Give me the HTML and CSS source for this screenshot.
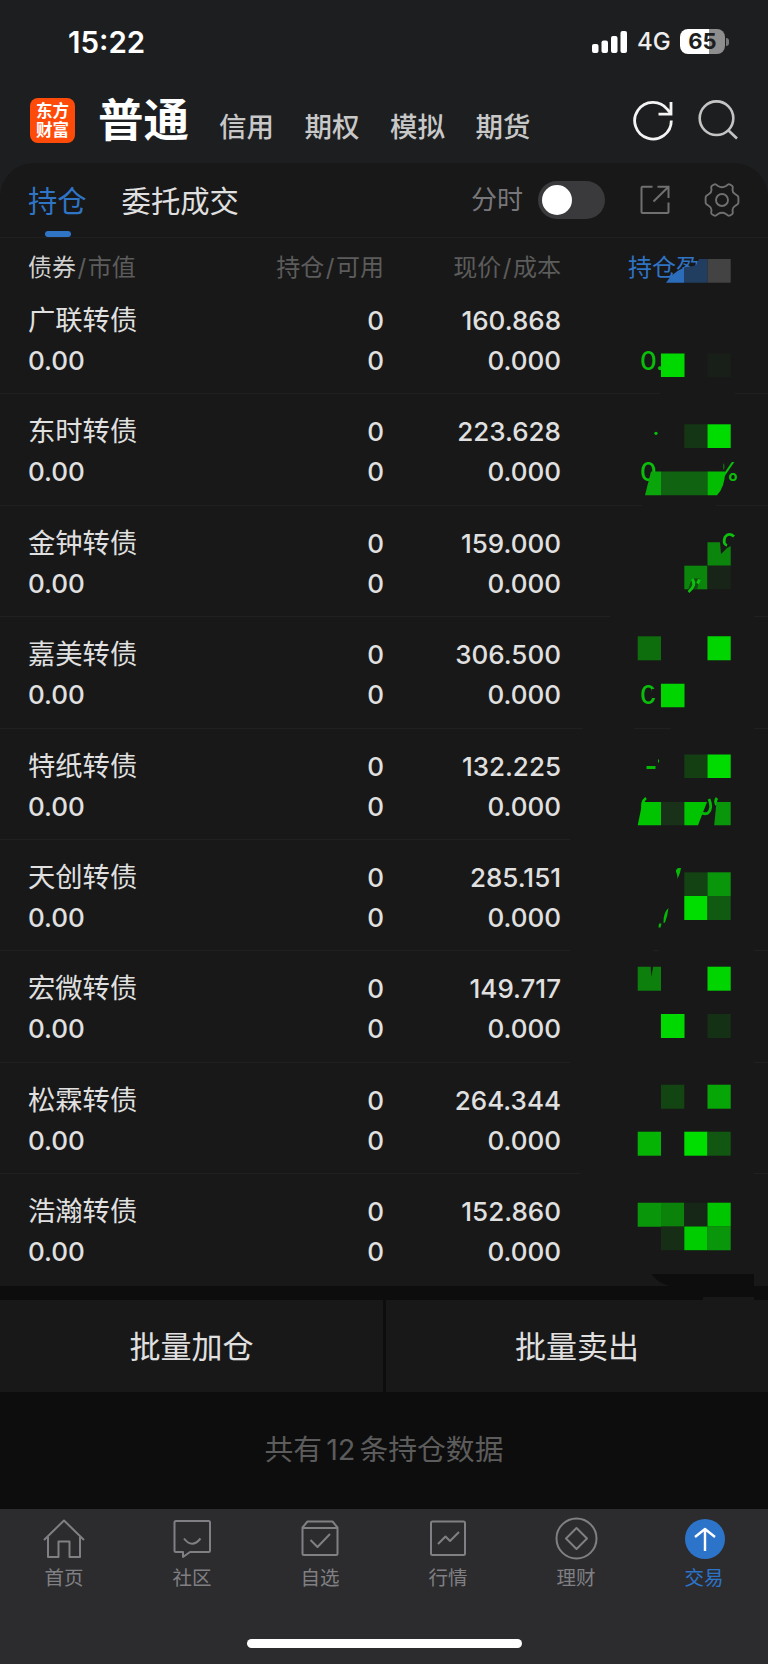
FILE: index.html
```
<!DOCTYPE html>
<html lang="zh-CN">
<head>
  <meta charset="utf-8">
  <title>持仓</title>
  <link rel="stylesheet" href="styles.css">
</head>
<body>
  <div class="status-bar">
    <span class="time">15:22</span>
    <div class="status-right">
      <svg class="signal" width="36" height="22" viewBox="0 0 36 22" fill="#fff">
        <rect x="0" y="13" width="6.5" height="9" rx="2"/>
        <rect x="9.5" y="9.5" width="6.5" height="12.5" rx="2"/>
        <rect x="19" y="5" width="6.5" height="17" rx="2"/>
        <rect x="28.5" y="0" width="6.5" height="22" rx="2"/>
      </svg>
      <span class="network">4G</span>
      <div class="battery">65</div>
      <div class="battery-cap"></div>
    </div>
  </div>

  <div class="top-nav">
    <div class="logo"><span>东方</span><span>财富</span></div>
    <span class="nav-main">普通</span>
    <span class="nav-item">信用</span>
    <span class="nav-item">期权</span>
    <span class="nav-item">模拟</span>
    <span class="nav-item">期货</span>
    <svg class="nav-refresh" width="42" height="42" viewBox="0 0 42 42" fill="none" stroke="#f4f4f4" stroke-width="2.8">
      <path d="M39.3 20.500A18.300 18.300 0 1 1 35.500 9.500L39 13.500"/>
      <path d="M39 2V14.200H26.500"/>
    </svg>
    <svg class="nav-search" width="42" height="42" viewBox="0 0 42 42" fill="none" stroke="#c4c4c4" stroke-width="2.6">
      <circle cx="19.500" cy="18.200" r="16.800"/>
      <path d="M31 30L40 38.500"/>
    </svg>
  </div>

  <div class="panel">
    <div class="tabs">
      <span class="tab active">持仓</span>
      <span class="tab">委托成交</span>
      <span class="switch-label">分时</span>
      <div class="switch"><div class="knob"></div></div>
      <svg class="share" width="30" height="30" viewBox="0 0 30 30" fill="none" stroke="#707070" stroke-width="2">
        <path d="M12.500 1.800H2.500Q1.500 1.800 1.500 2.800V27Q1.500 28 2.500 28H27.500Q28.500 28 28.500 27V17.500"/>
        <path d="M17.500 1.800H28.500V13M28 2.300L13.500 16.500"/>
      </svg>
      <svg class="gear" width="36" height="36" viewBox="-18 -18 36 36" fill="none" stroke="#707070" stroke-width="1.9">
        <path d="M-4 -14Q0 -11.600 4 -14L6 -15.500Q7 -16 8 -15.500L10 -14.200Q11 -13.500 10.800 -12.300L10.500 -10Q10.500 -7.500 13 -6L15.500 -4.300Q16.400 -3.500 16.400 -2.300V2.300Q16.400 3.500 15.500 4.300L13 6Q10.500 7.500 10.500 10L10.800 12.300Q11 13.500 10 14.200L8 15.500Q7 16 6 15.500L4 14Q0 11.600 -4 14L-6 15.500Q-7 16 -8 15.500L-10 14.200Q-11 13.500 -10.800 12.300L-10.500 10Q-10.500 7.500 -13 6L-15.500 4.300Q-16.400 3.500 -16.400 2.300V-2.300Q-16.400 -3.500 -15.500 -4.300L-13 -6Q-10.500 -7.500 -10.500 -10L-10.800 -12.300Q-11 -13.500 -10 -14.200L-8 -15.500Q-7 -16 -6 -15.500Z"/>
        <circle r="6"/>
      </svg>
    </div>

    <div class="table">
      <div class="row head">
        <span><b>债券</b><i>/</i>市值</span>
        <span>持仓<i>/</i>可用</span>
        <span>现价<i>/</i>成本</span>
        <span class="sorted">持仓盈</span>
      </div>
      <div class="row">
        <div class="cell"><span class="name">广联转债</span><span>0.00</span></div>
        <div class="cell"><span>0</span><span>0</span></div>
        <div class="cell"><span>160.868</span><span>0.000</span></div>
        <div class="cell profit"><span></span><span>0.</span></div>
      </div>
      <div class="row">
        <div class="cell"><span class="name">东时转债</span><span>0.00</span></div>
        <div class="cell"><span>0</span><span>0</span></div>
        <div class="cell"><span>223.628</span><span>0.000</span></div>
        <div class="cell profit"><span></span><span class="spread"><i>0</i><i>%</i></span></div>
      </div>
      <div class="row">
        <div class="cell"><span class="name">金钟转债</span><span>0.00</span></div>
        <div class="cell"><span>0</span><span>0</span></div>
        <div class="cell"><span>159.000</span><span>0.000</span></div>
      </div>
      <div class="row">
        <div class="cell"><span class="name">嘉美转债</span><span>0.00</span></div>
        <div class="cell"><span>0</span><span>0</span></div>
        <div class="cell"><span>306.500</span><span>0.000</span></div>
        <div class="cell profit"><span></span><span>0</span></div>
      </div>
      <div class="row">
        <div class="cell"><span class="name">特纸转债</span><span>0.00</span></div>
        <div class="cell"><span>0</span><span>0</span></div>
        <div class="cell"><span>132.225</span><span>0.000</span></div>
      </div>
      <div class="row">
        <div class="cell"><span class="name">天创转债</span><span>0.00</span></div>
        <div class="cell"><span>0</span><span>0</span></div>
        <div class="cell"><span>285.151</span><span>0.000</span></div>
      </div>
      <div class="row">
        <div class="cell"><span class="name">宏微转债</span><span>0.00</span></div>
        <div class="cell"><span>0</span><span>0</span></div>
        <div class="cell"><span>149.717</span><span>0.000</span></div>
      </div>
      <div class="row">
        <div class="cell"><span class="name">松霖转债</span><span>0.00</span></div>
        <div class="cell"><span>0</span><span>0</span></div>
        <div class="cell"><span>264.344</span><span>0.000</span></div>
      </div>
      <div class="row">
        <div class="cell"><span class="name">浩瀚转债</span><span>0.00</span></div>
        <div class="cell"><span>0</span><span>0</span></div>
        <div class="cell"><span>152.860</span><span>0.000</span></div>
      </div>

      <!-- mosaic that hides the profit column -->
      <svg class="mosaic" width="208" height="1064" viewBox="560 238 208 1064">
        <g fill="#181818">
          <path d="M660 392h75v5h-75zM642 503h74v5h-74zM610 615h144v5h-144zM583 726h51v5h-51zM671 726h83v5h-83zM570 837h198v5h-198zM570 949h83v5h-83zM659 949h95v5h-95zM570 1060h184v5h-184zM580 1171h174v5h-174z"/>
          <path d="M652 689h9v9h-9z"/>
          <path d="M704 460h19.500v13L719 496h-15z"/>
        </g>
        <path fill="#2b6cbb" d="M666 282.700Q672 273 684 267.500V282.700z"/>
        <path fill="#213d60" d="M684 267.500L696 265.500L699 259H707.500V282.700H684z"/>
        <path fill="#434343" d="M707.500 259h23.200v23.700h-23.200z"/>

        <path fill="#00d900" d="M661 353.500h23.500V377H661z"/>
        <path fill="#181f18" d="M707.500 353.500h23.200V377h-23.200z"/>

        <circle cx="656" cy="433.300" r="1.600" fill="#00c800"/>
        <path fill="#153615" d="M684.300 424.300h23.200V448h-23.200z"/>
        <path fill="#00dc00" d="M707.500 424.300h23.200V448h-23.200z"/>
        <path fill="#0aa50a" d="M651 471.500h10v23.800h-16z"/>
        <path fill="#106310" d="M661 471.500h46.500v23.800H661z"/>
        <path fill="#03bd03" d="M707.500 471.500H725Q725 487 717 495.300h-9.500z"/>

        <path fill="#0c850c" d="M707.500 542.300h12.500L721 554l6-6 3.700-2v19.700h-23.200z"/>
        <path fill="none" stroke="#0ec00e" stroke-width="2.800" d="M734 536.500Q729 532 725 537Q722.500 544 727 545.500"/>
        <path fill="#0c850c" d="M684.300 565.700h23.200v23.600h-23.200z"/>
        <path fill="#182418" d="M707.500 565.700h23.200v23.600h-23.200z"/>
        <path fill="#181818" d="M688 589.500l4-11h8l-3 11z" opacity=".5"/>
        <path fill="none" stroke="#0ec00e" stroke-width="2.800" d="M692 579Q697 585 688.500 592M699.500 579.500l-2 4"/>

        <path fill="#0e6e0e" d="M637.700 636.300h23.300v24h-23.300z"/>
        <path fill="#00d500" d="M707.500 636.300h23.200v24h-23.200zM661 683.700h23.500v23.600H661z"/>

        <path fill="#05b805" d="M646.500 766h9v3h-9zM658 759.500h1v3h-1z"/>
        <path fill="#133f13" d="M684.300 754.500h23.200V778h-23.200z"/>
        <path fill="#00dc00" d="M707.500 754.500h23.200V778h-23.200z"/>
        <path fill="#00c400" d="M642.500 802H661v23.300h-23.300z"/>
        <path fill="none" stroke="#00c400" stroke-width="2.600" d="M646 798Q641 802 643 810"/>
        <path fill="#183118" d="M661 802h23.300v23.300H661z"/>
        <path fill="#00c400" d="M684.300 802H707l-9 23.300h-13.700z"/>
        <path fill="none" stroke="#05b805" stroke-width="2.800" d="M709 799Q713 808 708 813Q704 815 701 812M717 798q-2.500 3-.5 7"/>
        <path fill="#0a960a" d="M716.500 802h14.200v23.300h-16.500z"/>

        <path fill="#05b805" d="M676 870l2-2h3q-.5 5-3.500 11q0-5-1.500-7zM668.500 908q-1 8-3.500 14.500l-1.500.5q-.5-10 5-15zM659 923.500h2.500l-1 4h-2z"/>
        <path fill="#134213" d="M684.300 872.300h23.200V896h-23.200z"/>
        <path fill="#0a960a" d="M707.500 872.300h23.200V896h-23.200z"/>
        <path fill="#00de00" d="M684.300 896h23.200v24h-23.200z"/>
        <path fill="#115a11" d="M707.500 896h23.200v24h-23.200z"/>

        <path fill="#0c7f0c" d="M637.700 966.700h13l.5 10 2-10h7.800v24h-23.300z"/>
        <path fill="#00d500" d="M707.500 966.700h23.200v24h-23.200z"/>
        <path fill="#00d900" d="M661 1014h23.500v24H661z"/>
        <path fill="#153115" d="M707.500 1014h23.200v24h-23.200z"/>

        <path fill="#134513" d="M661 1084.700h23.300v24H661z"/>
        <path fill="#07a607" d="M707.500 1084.700h23.200v24h-23.200z"/>
        <path fill="#05b305" d="M637.700 1131.700H661v24h-23.300z"/>
        <path fill="#00de00" d="M684.300 1131.700h23.200v24h-23.200z"/>
        <path fill="#115611" d="M707.500 1131.700h23.200v24h-23.200z"/>

        <path fill="#0a960a" d="M637.700 1202.700H661v24h-23.300zM707.500 1226.500h23.200v23.700h-23.200z"/>
        <path fill="#0b830b" d="M661 1202.700h23.300v24H661z"/>
        <path fill="#172717" d="M684.300 1202.700h23.200v24h-23.200z"/>
        <path fill="#00c600" d="M707.500 1202.700h23.200v23.800h-23.200z"/>
        <path fill="#162e16" d="M661 1226.500h23.300v23.700H661z"/>
        <path fill="#00cd00" d="M684.300 1226.500h23.200v23.700h-23.200z"/>

        <path fill="#0d0d0d" d="M651.500 1274H754v12.500h-83Q657 1283 651.500 1274z"/>
        <path fill="#181818" d="M703 1297h51v4h-51z"/>
      </svg>
    </div>
  </div>

  <div class="actions">
    <div class="action">批量加仓</div>
    <div class="action">批量卖出</div>
  </div>
  <div class="summary">共有<span>12</span>条持仓数据</div>

  <div class="tab-bar">
    <div class="tab-item">
      <svg width="44" height="44" viewBox="0 0 44 44">
        <path d="M2 23L22 3.500L42 23M6 20V40H16.500V24.500H27.500V40H38V20"/>
      </svg>
      <span>首页</span>
    </div>
    <div class="tab-item">
      <svg width="44" height="44" viewBox="0 0 44 44">
        <path d="M6 4H38.500Q40 4 40 5.500V33.500Q40 35 38.500 35H20L13 40V35H6Q4.500 35 4.500 33.500V5.500Q4.500 4 6 4zM14 21.500Q22 32 30.500 21.500"/>
      </svg>
      <span>社区</span>
    </div>
    <div class="tab-item">
      <svg width="44" height="44" viewBox="0 0 44 44">
        <path d="M4.500 10.500L9.500 4.500H34.500L39.500 10.500V36.500Q39.500 38 38 38H6Q4.500 38 4.500 36.500zM4.500 11H39.500M12.500 23L19.500 30L32 17"/>
      </svg>
      <span>自选</span>
    </div>
    <div class="tab-item">
      <svg width="44" height="44" viewBox="0 0 44 44">
        <rect x="5" y="4.500" width="34" height="33.500" rx="1.500"/>
        <path d="M12 27L19.500 19.500L24 24L33 15"/>
      </svg>
      <span>行情</span>
    </div>
    <div class="tab-item">
      <svg width="44" height="44" viewBox="0 0 44 44">
        <circle cx="22.500" cy="21.500" r="20"/>
        <path d="M22.500 11L33 21.500L22.500 32L12 21.500z"/>
      </svg>
      <span>理财</span>
    </div>
    <div class="tab-item current">
      <svg width="44" height="44" viewBox="0 0 44 44">
        <circle cx="23" cy="22" r="20"/>
        <path d="M23 34V12M13 20L23 12L33 20"/>
      </svg>
      <span>交易</span>
    </div>
  </div>
  <div class="home-area"><div class="home-indicator"></div></div>
</body>
</html>
```
FILE: styles.css
```
* {
  box-sizing: border-box;
}

body {
  margin: 0;
  width: 768px;
  height: 1664px;
  overflow: hidden;
  background: #1d1e20;
  color: #e0e0e0;
  font-family: Inter, "Noto Sans CJK SC", sans-serif;
}

svg {
  display: block;
  flex-shrink: 0;
}

i {
  font-style: normal;
}

/* status bar */
.status-bar {
  display: flex;
  justify-content: space-between;
  align-items: center;
  height: 84px;
  padding: 0 39px 1px 68px;
}

.time {
  font-size: 29.5px;
  font-weight: 600;
  line-height: 80px;
  color: #fff;
}

.status-right {
  display: flex;
  align-items: center;
}

.network {
  margin-left: 9px;
  width: 43px;
  font-size: 24px;
  font-weight: 500;
  color: #eee;
}

.battery {
  width: 45px;
  height: 25px;
  border-radius: 8px;
  background: linear-gradient(to right, #fff 65%, #8e8e8e 65%);
  color: #1d1e20;
  font-size: 22px;
  font-weight: 700;
  line-height: 25px;
  text-align: center;
}

.battery-cap {
  width: 3px;
  height: 8px;
  margin-left: 1px;
  border-radius: 0 3px 3px 0;
  background: #77787a;
}

/* account types */
.top-nav {
  display: flex;
  height: 79px;
  padding-left: 30px;
  white-space: nowrap;
}

.logo {
  display: flex;
  flex-direction: column;
  width: 45px;
  height: 45px;
  margin-top: 14px;
  padding-top: 4px;
  border-radius: 8px;
  background: #ff4b0a;
  color: #fff;
  font-size: 16.5px;
  font-weight: 700;
  line-height: 18.5px;
  text-align: center;
}

.nav-main {
  width: 121px;
  margin-left: 23px;
  font-size: 45.5px;
  font-weight: 700;
  line-height: 73px;
  color: #fff;
}

.nav-item {
  width: 85.5px;
  font-size: 27.5px;
  font-weight: 500;
  line-height: 87px;
  color: #c8c8c8;
}

.nav-refresh {
  margin: 16px 0 0 71px;
}

.nav-search {
  margin: 16px 0 0 23px;
}

.panel {
  border-radius: 34px 34px 0 0;
  background: #181818;
}

.tabs {
  display: flex;
  align-items: center;
  height: 75px;
  padding-left: 28px;
  border-bottom: 1px solid #202020;
}

.tab {
  position: relative;
  margin-right: 35px;
  padding-top: 3px;
  font-size: 29.3px;
  line-height: 71px;
}

.tab.active {
  color: #2f74c5;
}

.tab.active::after {
  content: "";
  position: absolute;
  left: 17px;
  bottom: 0;
  width: 26px;
  height: 6px;
  border-radius: 3px;
  background: #2f74c5;
}

.switch-label {
  margin-left: auto;
  font-size: 26px;
  line-height: 74px;
  color: #77777b;
}

.switch {
  width: 67px;
  height: 38px;
  margin-left: 15px;
  padding: 4px;
  border-radius: 19px;
  background: #3a3a3c;
}

.knob {
  width: 30px;
  height: 30px;
  border-radius: 50%;
  background: #fff;
}

.share {
  margin-left: 35px;
}

.gear {
  margin: 0 28px 0 34px;
}

/* holdings */
.table {
  position: relative;
}

.row {
  display: grid;
  grid-template-columns: 184px 172px 177px 138px;
  height: 111.4px;
  padding: 18px 0 0 28px;
  border-bottom: 1px solid #202020;
}

.row:nth-child(10) {
  border-bottom: 0;
}

.head {
  height: 45px;
  padding-top: 0;
  border-bottom: 0;
  font-size: 24px;
  line-height: 60px;
  white-space: nowrap;
  color: #5c5c5c;
}

.head b {
  font-weight: 400;
  color: #d0d0d0;
}

.head i {
  margin: 0 1.5px;
}

.head span:nth-child(2),
.head span:nth-child(3) {
  text-align: right;
}

.head .sorted {
  padding-left: 67px;
  color: #2f74c5;
}

.cell {
  display: flex;
  flex-direction: column;
  font-size: 26px;
  font-weight: 500;
  line-height: 40px;
  text-align: right;
}

.cell span {
  height: 40px;
}

.cell:first-child {
  text-align: left;
}

.cell .name {
  font-size: 27.3px;
  font-weight: 400;
}

.cell.profit {
  padding-left: 79px;
  color: #0bbd0b;
  text-align: left;
}

.cell .spread {
  display: flex;
  gap: 57px;
}

.mosaic {
  position: absolute;
  top: 0;
  right: 0;
}

/* batch buttons */
.actions {
  display: grid;
  grid-template-columns: 383px 382px;
  gap: 3px;
  height: 106.5px;
  padding-top: 14px;
  background: #0d0d0d;
}

.action {
  padding-top: 2px;
  background: #181818;
  font-size: 31px;
  line-height: 90px;
  text-align: center;
}

.summary {
  height: 117px;
  background: #0d0d0d;
  color: #5c5c5c;
  font-size: 28.8px;
  line-height: 116px;
  text-align: center;
}

.summary span {
  margin: 0 4px;
}

.tab-bar {
  display: grid;
  grid-template-columns: repeat(6, 128px);
  height: 100px;
  background: #2c2c2e;
}

.tab-item {
  display: flex;
  flex-direction: column;
  align-items: center;
  padding-top: 8px;
  color: #808084;
  font-size: 19.5px;
  line-height: 34px;
}

.tab-item svg {
  fill: none;
  stroke: #808084;
  stroke-width: 2;
  stroke-linejoin: round;
}

.tab-item.current {
  color: #2c74c9;
}

.tab-item.current circle {
  fill: #2c74c9;
  stroke: none;
}

.tab-item.current path {
  stroke: #fff;
  stroke-width: 2.4;
}

.home-area {
  height: 60px;
  padding-top: 29.5px;
  background: #2c2c2e;
}

.home-indicator {
  width: 275px;
  height: 9.5px;
  margin: 0 auto;
  border-radius: 5px;
  background: #fff;
}
```
